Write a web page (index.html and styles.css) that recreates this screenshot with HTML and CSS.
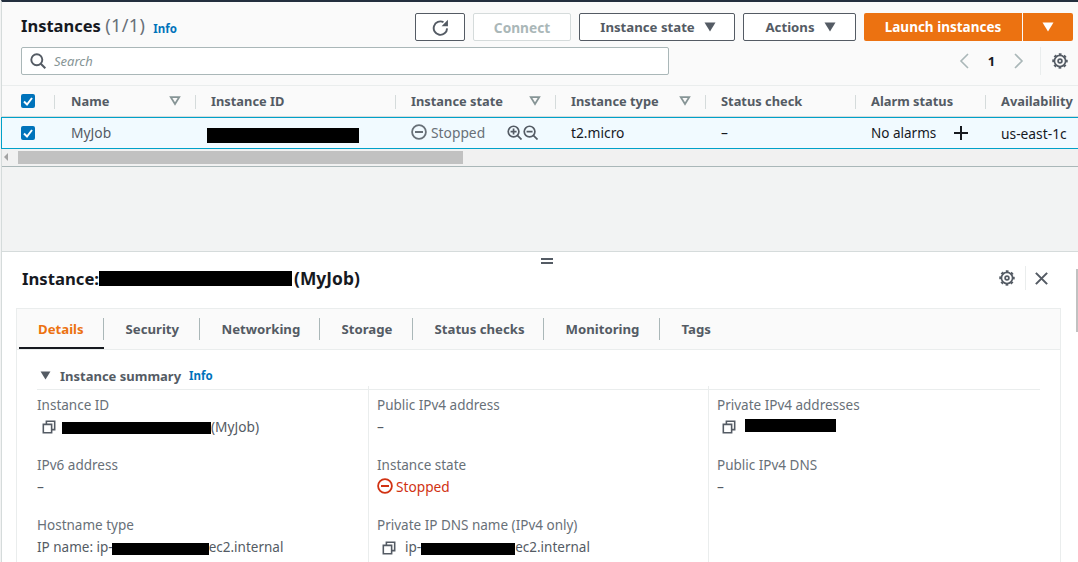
FILE: index.html
```html
<!DOCTYPE html>
<html lang="en">
<head>
    <meta charset="UTF-8">
    <title>Instances</title>
    <link rel="stylesheet" href="styles.css">
</head>
<body>
    <svg class="sprite" aria-hidden="true">
        <symbol id="gear" viewBox="0 0 16 16"><circle cx="8" cy="8" r="5.600" fill="none" stroke="currentColor" stroke-width="1.700"/><circle cx="8" cy="8" r="6.800" fill="none" stroke="currentColor" stroke-width="1.900" stroke-dasharray="2.700 2.640" stroke-dashoffset="1.350"/><circle cx="8" cy="8" r="1.900" fill="none" stroke="currentColor" stroke-width="1.700"/></symbol>
        <symbol id="copy" viewBox="0 0 16 16"><path fill="none" stroke="currentColor" stroke-width="1.800" d="M1.500 5h9.500v9.500H1.500zM5 5V1.500h9.500V11H11"/></symbol>
        <symbol id="stopped" viewBox="0 0 16 16"><circle cx="8" cy="8" r="6.900" fill="none" stroke="currentColor" stroke-width="1.800"/><path stroke="currentColor" stroke-width="2" d="M4 8h8"/></symbol>
        <symbol id="zoom-in" viewBox="0 0 16 16"><circle cx="7" cy="7" r="5.700" fill="none" stroke="currentColor" stroke-width="1.800"/><path stroke="currentColor" stroke-width="1.800" fill="none" d="M11 11l4.500 4.500M3.800 7h6.400M7 3.800v6.400"/></symbol>
        <symbol id="zoom-out" viewBox="0 0 16 16"><circle cx="7" cy="7" r="5.700" fill="none" stroke="currentColor" stroke-width="1.800"/><path stroke="currentColor" stroke-width="1.800" fill="none" d="M11 11l4.500 4.500M3.800 7h6.400"/></symbol>
        <symbol id="filter" viewBox="0 0 12 10"><path fill="none" stroke="currentColor" stroke-width="1.800" d="M1.800 1.200h8.400L6 8z"/></symbol>
        <symbol id="caret" viewBox="0 0 12 10"><path fill="currentColor" d="M.5.500h11L6 9.500z"/></symbol>
        <symbol id="check" viewBox="0 0 14 14"><rect width="14" height="14" rx="2" fill="#0073bb"/><path fill="none" stroke="#fff" stroke-width="2" d="M3 7.500l3 3 5-6.500"/></symbol>
    </svg>

    <div class="page">
        <section class="list">
            <div class="toolbar">
                <h1>Instances <span class="count">(1/1)</span></h1>
                <a class="info info-top">Info</a>
                <div class="actions">
                    <button class="btn btn-refresh" aria-label="Refresh">
                        <svg class="icon" viewBox="0 0 16 16"><path fill="none" stroke="currentColor" stroke-width="1.800" d="M14.200 8.800A6.300 6.300 0 1 1 10.800 3"/><path fill="currentColor" d="M15 .8v6H9z"/></svg>
                    </button>
                    <button class="btn btn-connect" disabled>Connect</button>
                    <button class="btn btn-state">Instance state <svg class="caret"><use href="#caret"/></svg></button>
                    <button class="btn btn-actions">Actions <svg class="caret"><use href="#caret"/></svg></button>
                    <button class="btn-launch">Launch instances</button>
                    <button class="btn-launch-more" aria-label="More"><svg class="caret"><use href="#caret"/></svg></button>
                </div>
            </div>
            <div class="search-row">
                <label class="search">
                    <svg class="icon search-icon" viewBox="0 0 16 16"><circle cx="6.800" cy="6.800" r="5.500" fill="none" stroke="currentColor" stroke-width="1.900"/><path stroke="currentColor" stroke-width="2" d="M10.800 10.800l4.500 4.500"/></svg>
                    <span class="placeholder">Search</span>
                </label>
                <div class="pager">
                    <svg class="chev" viewBox="0 0 10 16"><path fill="none" stroke="currentColor" stroke-width="1.600" d="M9 1L2 8l7 7"/></svg>
                    <span class="page-num">1</span>
                    <svg class="chev" viewBox="0 0 10 16"><path fill="none" stroke="currentColor" stroke-width="1.600" d="M1 1l7 7-7 7"/></svg>
                </div>
                <div class="prefs"><svg class="icon"><use href="#gear"/></svg></div>
            </div>
        </section>

        <div class="table">
            <div class="thead">
                <div class="th th-check"><svg class="check"><use href="#check"/></svg></div>
                <div class="th th-name"><span class="sep"></span>Name<svg class="filter"><use href="#filter"/></svg></div>
                <div class="th"><span class="sep"></span>Instance ID</div>
                <div class="th"><span class="sep"></span>Instance state<svg class="filter"><use href="#filter"/></svg></div>
                <div class="th"><span class="sep"></span>Instance type<svg class="filter"><use href="#filter"/></svg></div>
                <div class="th"><span class="sep"></span>Status check</div>
                <div class="th"><span class="sep"></span>Alarm status</div>
                <div class="th"><span class="sep"></span>Availability</div>
            </div>
            <div class="trow">
                <div class="td td-check"><svg class="check"><use href="#check"/></svg></div>
                <div class="td td-name">MyJob</div>
                <div class="td"><span class="redact redact-row"></span></div>
                <div class="td td-state">
                    <svg class="state-icon"><use href="#stopped"/></svg>
                    <span class="state-text">Stopped</span>
                    <svg class="zoom"><use href="#zoom-in"/></svg>
                    <svg class="zoom"><use href="#zoom-out"/></svg>
                </div>
                <div class="td td-dark">t2.micro</div>
                <div class="td td-dark">–</div>
                <div class="td td-dark td-alarm">No alarms
                    <svg class="plus" viewBox="0 0 14 14"><path stroke="#16191f" stroke-width="2" d="M7 0v14M0 7h14"/></svg>
                </div>
                <div class="td td-dark td-zone">us-east-1c</div>
            </div>
        </div>

        <div class="hscroll">
            <span class="arrow"></span>
            <div class="thumb"></div>
        </div>

        <div class="gap"></div>

        <section class="split">
            <div class="handle"></div>
            <div class="page-scroll"></div>
            <header class="split-head">
                <h2>Instance:<span class="redact redact-title"></span><span class="title-name">(MyJob)</span></h2>
                <div class="split-tools">
                    <svg class="icon"><use href="#gear"/></svg>
                    <span class="tool-sep"></span>
                    <svg class="icon close-icon" viewBox="0 0 16 16"><path fill="none" stroke="currentColor" stroke-width="2.200" d="M2 2l12 12M14 2L2 14"/></svg>
                </div>
            </header>

            <div class="tabs-box">
                <nav class="tabs">
                    <a class="tab active">Details</a>
                    <a class="tab">Security</a>
                    <a class="tab">Networking</a>
                    <a class="tab">Storage</a>
                    <a class="tab">Status checks</a>
                    <a class="tab">Monitoring</a>
                    <a class="tab tab-last">Tags</a>
                </nav>

                <div class="summary">
                    <div class="summary-head">
                        <svg class="caret"><use href="#caret"/></svg>
                        <h3>Instance summary</h3>
                        <a class="info">Info</a>
                    </div>
                    <div class="fields">
                        <div class="col">
                            <div class="field">
                                <div class="label">Instance ID</div>
                                <div class="value"><svg class="copy"><use href="#copy"/></svg><span class="redact redact-id"></span>(MyJob)</div>
                            </div>
                            <div class="field">
                                <div class="label">IPv6 address</div>
                                <div class="value">–</div>
                            </div>
                            <div class="field">
                                <div class="label">Hostname type</div>
                                <div class="value value-host">IP name: ip-<span class="redact redact-host"></span>ec2.internal</div>
                            </div>
                        </div>
                        <div class="col">
                            <div class="field">
                                <div class="label">Public IPv4 address</div>
                                <div class="value">–</div>
                            </div>
                            <div class="field">
                                <div class="label">Instance state</div>
                                <div class="value value-stopped"><svg class="state-icon"><use href="#stopped"/></svg>Stopped</div>
                            </div>
                            <div class="field">
                                <div class="label">Private IP DNS name (IPv4 only)</div>
                                <div class="value value-host"><svg class="copy copy-dns"><use href="#copy"/></svg>ip-<span class="redact redact-dns"></span>ec2.internal</div>
                            </div>
                        </div>
                        <div class="col">
                            <div class="field">
                                <div class="label">Private IPv4 addresses</div>
                                <div class="value"><svg class="copy"><use href="#copy"/></svg><span class="redact redact-ip"></span></div>
                            </div>
                            <div class="field">
                                <div class="label">Public IPv4 DNS</div>
                                <div class="value">–</div>
                            </div>
                        </div>
                    </div>
                </div>
            </div>
        </section>
    </div>
</body>
</html>
```

FILE: styles.css
```css
* {
    box-sizing: border-box;
}
html, body {
    margin: 0;
    height: 100%;
    overflow: hidden;
}
body {
    font-family: "Noto Sans", Arial, sans-serif;
    font-size: 13px;
    color: #16191f;
    background-color: #f2f3f3;
}
h1, h2, h3 {
    margin: 0;
}
button {
    font-family: inherit;
}
.sprite {
    display: none;
}
.page {
    height: 562px;
    margin-left: 1px;
    border-top: 2px solid #232f3e;
    border-left: 1px solid #d5dbdb;
    display: flex;
    flex-direction: column;
}
.icon {
    width: 16px;
    height: 16px;
    color: #545b64;
}

/* list header */
.list {
    height: 83px;
    background-color: #fafafa;
    padding: 11px 5px 0 19px;
}
.toolbar {
    display: flex;
    align-items: center;
    height: 28px;
}
h1 {
    font-size: 16.500px;
    font-weight: 700;
    line-height: 24px;
    margin-bottom: 4px;
}
.count {
    font-size: 18px;
    font-weight: 400;
    color: #687078;
    letter-spacing: 0.4px;
}
.info {
    font-size: 11.500px;
    font-weight: 700;
    color: #0073bb;
}
.info-top {
    margin-left: 8px;
    margin-top: 2px;
}
.actions {
    margin-left: auto;
    display: flex;
    height: 28px;
}
.btn {
    height: 28px;
    background-color: #fff;
    border: 1px solid #545b64;
    border-radius: 2px;
    color: #545b64;
    font-size: 13.200px;
    font-weight: 700;
    padding: 0;
    margin-right: 8px;
    display: flex;
    align-items: center;
    justify-content: center;
}
.btn-refresh {
    width: 50px;
}
.btn-refresh .icon {
    width: 17px;
    height: 17px;
}
.btn-connect {
    width: 98px;
    border-color: #d5dbdb;
    color: #aab7b8;
    font-size: 13.700px;
}
.btn-state {
    width: 156px;
    padding-left: 2px;
}
.btn-actions {
    width: 113px;
    padding-left: 2px;
}
.caret {
    width: 12px;
    height: 10px;
    margin-left: 9px;
    color: #545b64;
}
.btn-launch, .btn-launch-more {
    height: 28px;
    border: none;
    background-color: #ec7211;
    color: #fff;
    font-size: 13.500px;
    font-weight: 700;
    border-radius: 2px 0 0 2px;
}
.btn-launch {
    width: 158px;
    margin-right: 1px;
}
.btn-launch-more {
    width: 50px;
    border-radius: 0 2px 2px 0;
    padding: 0;
}
.btn-launch-more .caret {
    margin: 0;
    color: #fff;
}
.search-row {
    display: flex;
    align-items: center;
    margin-top: 6px;
    height: 28px;
}
.search {
    width: 648px;
    height: 28px;
    background-color: #fff;
    border: 1px solid #aab7b8;
    border-radius: 2px;
    display: flex;
    align-items: center;
    padding-left: 8px;
}
.placeholder {
    margin-left: 8px;
    font-style: italic;
    color: #879596;
    font-size: 13px;
}
.pager {
    margin-left: auto;
    display: flex;
    align-items: center;
    color: #aab7b8;
}
.chev {
    width: 10px;
    height: 16px;
}
.page-num {
    width: 45px;
    text-align: center;
    font-weight: 700;
    color: #16191f;
}
.prefs {
    margin-left: 16px;
    height: 28px;
    width: 33px;
    border-left: 1px solid #eaeded;
    display: flex;
    align-items: center;
    padding-left: 11px;
}

/* instances table */
.thead, .trow {
    display: grid;
    grid-template-columns: 52px 141px 200px 160px 150px 150px 130px 93px;
}
.thead {
    height: 32px;
    background-color: #fafafa;
    border-top: 1px solid #eaeded;
    border-bottom: 1px solid #d5dbdb;
}
.th {
    position: relative;
    display: flex;
    align-items: center;
    padding-left: 16px;
    padding-right: 14px;
    font-size: 12.850px;
    font-weight: 700;
    color: #545b64;
    white-space: nowrap;
    overflow: hidden;
}
.sep {
    position: absolute;
    left: 0;
    top: 9px;
    height: 14px;
    border-left: 1px solid #d5dbdb;
}
.filter {
    width: 12px;
    height: 10px;
    margin-left: auto;
    color: #879596;
}
.th-check {
    padding-left: 19px;
}
.th-name, .td-name {
    padding-left: 17px;
}
.check {
    width: 14px;
    height: 14px;
}
.trow {
    height: 32px;
    background-color: #f1faff;
    border-top: 1px solid #00a1c9;
    border-bottom: 1px solid #00a1c9;
    box-shadow: -1px 0 #00a1c9;
    font-size: 13.800px;
}
.td {
    display: flex;
    align-items: center;
    padding-left: 16px;
    padding-bottom: 2px;
    color: #545b64;
    white-space: nowrap;
    overflow: hidden;
}
.td-name {
    padding-left: 17px;
}
.td-check {
    padding-left: 19px;
    padding-bottom: 0;
}
.td-dark {
    color: #16191f;
}
.td-alarm {
    font-size: 13.500px;
    padding-bottom: 0;
}
.td-zone {
    padding-bottom: 0;
}
.state-icon {
    width: 16px;
    height: 16px;
    margin-right: 4px;
}
.state-text {
    color: #687078;
    margin-right: 22px;
}
.td-state .state-icon {
    color: #687078;
}
.zoom {
    width: 15px;
    height: 15px;
    color: #545b64;
    margin-right: 1px;
}
.plus {
    width: 14px;
    height: 14px;
    margin-left: 18px;
}
.redact {
    display: inline-block;
    background-color: #000;
    flex: none;
}
.redact-row {
    width: 152px;
    height: 15px;
    margin-left: -4px;
    margin-top: 6px;
}

/* horizontal scrollbar */
.hscroll {
    display: flex;
    align-items: center;
    height: 18px;
    background-color: #f1f1f1;
    border-bottom: 1px solid #aab7b8;
    padding: 0 0 1px 2px;
}
.arrow {
    width: 0;
    height: 0;
    border-top: 4px solid transparent;
    border-bottom: 4px solid transparent;
    border-right: 4px solid #a3a3a3;
    margin-right: 10px;
}
.thumb {
    width: 445px;
    height: 13px;
    background-color: #c1c1c1;
}
.gap {
    flex: 0 0 84px;
    background-color: #f2f3f3;
}

/* split panel */
.split {
    position: relative;
    flex: 1;
    background-color: #fff;
    border-top: 1px solid #d5dbdb;
    overflow: hidden;
}
.handle {
    position: absolute;
    left: 539px;
    top: 6px;
    width: 12px;
    height: 6px;
    border-top: 2px solid #545b64;
    border-bottom: 2px solid #545b64;
}
.page-scroll {
    position: absolute;
    right: 0;
    top: 17px;
    width: 2px;
    height: 63px;
    background-color: #c1c1c1;
}
.split-head {
    height: 56px;
    display: flex;
    align-items: center;
    padding: 0 29px 4px 20px;
}
h2 {
    font-size: 16.700px;
    font-weight: 700;
    display: flex;
    align-items: center;
}
.title-name {
    font-size: 17.400px;
}
.redact-title {
    width: 193px;
    height: 15px;
    margin-right: 2px;
}
.split-tools {
    margin-left: auto;
    display: flex;
    align-items: center;
}
.tool-sep {
    height: 24px;
    border-left: 1px solid #eaeded;
    margin: 0 8px 0 10px;
}
.close-icon {
    width: 15px;
    height: 15px;
}
.tabs-box {
    margin-left: 14px;
    width: 1045px;
    border: 1px solid #eaeded;
    border-bottom: none;
}
.tabs {
    height: 41px;
    background-color: #fafafa;
    border-bottom: 1px solid #eaeded;
    display: grid;
    grid-template-columns: 85px 96px 120px 93px 131px 116px 90px;
    padding-left: 2px;
}
.tab {
    position: relative;
    display: flex;
    align-items: center;
    padding-left: 21.500px;
    font-size: 13.200px;
    font-weight: 700;
    color: #545b64;
    white-space: nowrap;
}
.tab::after {
    content: "";
    position: absolute;
    right: 0;
    top: 9px;
    height: 22px;
    border-right: 1px solid #aab7b8;
}
.tab-last::after {
    display: none;
}
.tab.active {
    color: #ec7211;
    padding-left: 19px;
    box-shadow: inset 0 -2px #16191f;
}

/* summary */
.summary {
    padding: 0 20px;
}
.summary-head {
    height: 40px;
    display: flex;
    align-items: center;
    border-bottom: 1px solid #eaeded;
    padding-top: 12px;
}
.summary-head .caret {
    margin: 0 9px 0 3px;
    width: 11px;
    height: 9px;
}
h3 {
    font-size: 13px;
    font-weight: 700;
    color: #545b64;
    margin-right: 8px;
}
.fields {
    display: grid;
    grid-template-columns: 331px 340px 331px;
    margin-top: -4px;
}
.col {
    padding-top: 9px;
    padding-left: 8px;
    height: 200px;
    border-left: 1px solid #eaeded;
}
.col:first-child {
    border-left: none;
    padding-left: 0;
}
.field {
    height: 60px;
}
.label {
    height: 20px;
    line-height: 20px;
    font-size: 13.500px;
    color: #687078;
}
.value {
    height: 24px;
    display: flex;
    align-items: center;
    padding-bottom: 2px;
    font-size: 13.700px;
    color: #545b64;
    white-space: nowrap;
}
.value-host {
    font-size: 13.500px;
    padding-bottom: 0;
}
.copy {
    width: 14px;
    height: 14px;
    margin: 2px 6px 0 5px;
    color: #545b64;
}
.copy-dns {
    margin-right: 9px;
}
.value-stopped {
    color: #d13212;
}
.value-stopped .state-icon {
    margin-right: 3px;
}
.redact-id {
    width: 149px;
    height: 12px;
    margin-top: 4px;
}
.redact-host {
    width: 97px;
    height: 12px;
    margin-left: -1px;
    margin-top: 4px;
}
.redact-dns {
    width: 94px;
    height: 12px;
    margin-top: 4px;
}
.redact-ip {
    width: 91px;
    height: 13px;
    margin-left: 3px;
    margin-top: -1px;
}
```
